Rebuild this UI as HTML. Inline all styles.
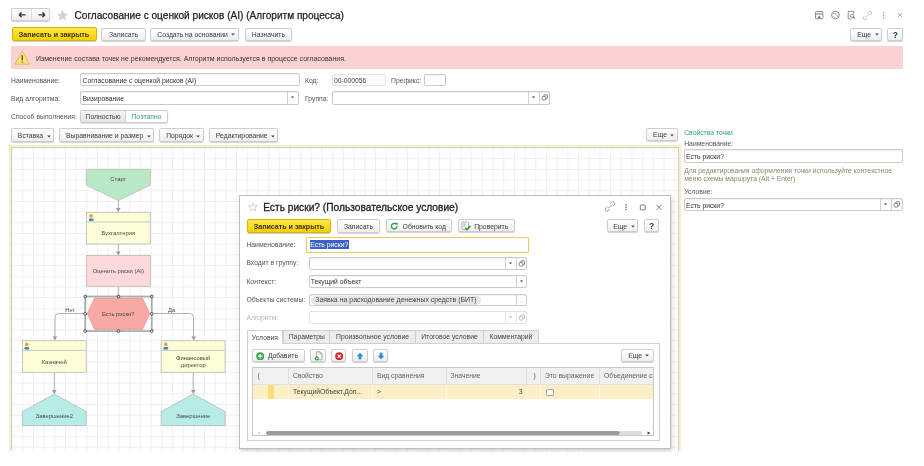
<!DOCTYPE html>
<html><head><meta charset="utf-8">
<style>
*{box-sizing:border-box;margin:0;padding:0}
html,body{width:924px;height:466px;overflow:hidden;background:#fff}
body{filter:blur(0.4px)}
body{position:relative;font-family:"Liberation Sans",sans-serif;font-size:6.8px;color:#3a3a3a}
.a{position:absolute}
.t{position:absolute;white-space:nowrap;line-height:1}
.btn{position:absolute;border:1px solid #cdcdcd;border-radius:2px;background:linear-gradient(#ffffff,#eeeeee);box-shadow:0 1px 1px rgba(0,0,0,.18);color:#3c3c3c;text-align:center;white-space:nowrap;font-size:6.8px}
.yb{position:absolute;border:1px solid #d6b400;border-radius:2px;background:linear-gradient(#ffe94a,#f5cf00);box-shadow:0 1px 1px rgba(0,0,0,.2);color:#3a3300;text-align:center;white-space:nowrap;font-weight:bold;font-size:7.1px;-webkit-text-stroke:0}
.inp{position:absolute;border:1px solid #cacaca;border-radius:2px;background:#fff;box-shadow:inset 0 1px 1px rgba(0,0,0,.06);color:#333;white-space:nowrap;overflow:hidden;padding-left:1.2px}
.dd{position:absolute;top:0;bottom:0;border-left:1px solid #d0d0d0}
.arr{display:inline-block;vertical-align:middle;margin-left:3.5px;position:relative;top:-0.5px}
.lbl{position:absolute;white-space:nowrap;color:#555;line-height:1}
</style></head><body>

<!-- top nav -->
<div class="btn" style="left:11px;top:8.2px;width:39.2px;height:13.2px;"></div>
<div class="a" style="left:31px;top:9.2px;width:1px;height:11px;background:#dcdcdc"></div>
<svg class="a" style="left:11px;top:8.4px" width="40" height="14" viewBox="0 0 40 14">
  <path d="M8 6.8h6.5M8 6.8l2.6-2.4M8 6.8l2.6 2.4" stroke="#333" stroke-width="1.3" fill="none"/>
  <path d="M34 6.8h-6.5M34 6.8l-2.6-2.4M34 6.8l-2.6 2.4" stroke="#333" stroke-width="1.3" fill="none"/>
</svg>
<svg class="a" style="left:56px;top:9px" width="13" height="13" viewBox="0 0 24 24"><path d="M12 1.5l3.1 7 7.4.6-5.6 4.9 1.7 7.3L12 17.4l-6.6 3.9 1.7-7.3L1.5 9.1l7.4-.6z" fill="#d3d3d3"/></svg>
<div class="t" style="left:74.5px;top:10.5px;font-size:10.1px;color:#222;-webkit-text-stroke:0.25px #222">Согласование с оценкой рисков (AI) (Алгоритм процесса)</div>

<!-- top-right icons -->
<svg class="a" style="left:812px;top:9px" width="95" height="12" viewBox="0 0 95 12">
  <g fill="none" stroke="#858585" stroke-width="0.9">
    <rect x="3.5" y="2.5" width="7.4" height="7.2" rx="0.8"/>
    <path d="M3.8 4.3h6.8M3.8 5.6h6.8" stroke-width="0.7"/>
    <circle cx="23.4" cy="6.1" r="3.9"/>
    <path d="M21 5.2c0.8-1.4 2-1.2 2.6-0.6 0.6 0.6 0.2 1.3 1 1.6 0.7 0.3 1.2 0.9 0.7 1.8M21.4 7.4c0.6 0.4 1.2 0.6 1.4 1.2" stroke-width="0.8"/>
    <path d="M36.2 2.4h5.6v3M36.2 2.4v7.5h3.2"/>
    <circle cx="39.9" cy="6.8" r="1.6"/>
  </g>
  <rect x="6.3" y="7.4" width="2" height="1.8" fill="#555"/>
  <path d="M41.1 8l1.7 1.7" stroke="#666" stroke-width="1.1"/>
  <g fill="none" stroke="#bdbdbd" stroke-width="0.9">
    <path d="M53.5 8.5l4-4M52.8 6.8l-1 1a1.6 1.6 0 0 0 2.3 2.3l1-1M58.2 6.2l1-1a1.6 1.6 0 0 0-2.3-2.3l-1 1"/>
  </g>
  <g fill="#8a8a8a"><rect x="71" y="3" width="1" height="1.3"/><rect x="71" y="5.6" width="1" height="1.3"/><rect x="71" y="8.2" width="1" height="1.3"/></g>
  <path d="M86 4l4 4M90 4l-4 4" stroke="#a8a8a8" stroke-width="0.9"/>
</svg>

<!-- command bar -->
<div class="yb" style="left:11.5px;top:27.3px;width:85px;height:13.5px;line-height:14px">Записать и закрыть</div>
<div class="btn" style="left:101.4px;top:27.5px;width:44.3px;height:13.3px;line-height:11.3px">Записать</div>
<div class="btn" style="left:150.2px;top:27.5px;width:89.3px;height:13.3px;line-height:11.3px;padding-left:3px">Создать на основании<svg class="arr" width="4" height="3" viewBox="0 0 4 3"><path d="M0.2 0.6H3.8L2 2.6z" fill="#444"/></svg></div>
<div class="btn" style="left:244.5px;top:27.5px;width:47.8px;height:13.3px;line-height:11.3px">Назначить</div>
<div class="btn" style="left:850.3px;top:27.5px;width:32.2px;height:13px;line-height:11px;padding-left:3px">Еще<svg class="arr" width="4" height="3" viewBox="0 0 4 3"><path d="M0.2 0.6H3.8L2 2.6z" fill="#444"/></svg></div>
<div class="btn" style="left:887.2px;top:27.5px;width:16.2px;height:13px;line-height:12px;font-weight:bold;color:#333;font-size:8.5px">?</div>

<!-- warning bar -->
<div class="a" style="left:11px;top:46.3px;width:892.4px;height:22.3px;background:#fad2d2"></div>
<svg class="a" style="left:14px;top:49.5px" width="17" height="16" viewBox="0 0 17 16">
  <path d="M8.3 1.2L15.6 14.2H1z" fill="#f8e27a" stroke="#d9bf4a" stroke-width="0.9" stroke-linejoin="round"/>
  <path d="M8.3 5.2v5" stroke="#6b5a10" stroke-width="1.4"/><circle cx="8.3" cy="12" r="0.8" fill="#6b5a10"/>
</svg>
<div class="t" style="left:35.9px;top:55px;font-size:7px;color:#3a3030">Изменение состава точек не рекомендуется. Алгоритм используется в процессе согласования.</div>

<!-- form -->
<div class="lbl" style="left:11px;top:78px">Наименование:</div>
<div class="inp" style="left:80.3px;top:73.3px;width:219.5px;height:13.2px;line-height:13.2px">Согласование с оценкой рисков (AI)</div>
<div class="lbl" style="left:305px;top:78px">Код:</div>
<div class="inp" style="left:331.7px;top:73.8px;width:53.9px;height:12.7px;line-height:12.7px;background:#fdfdfd;border-color:#e2e2e2;box-shadow:none;color:#444">00-000056</div>
<div class="lbl" style="left:391px;top:78px">Префикс:</div>
<div class="inp" style="left:423.7px;top:73.8px;width:22px;height:12.7px"></div>

<div class="lbl" style="left:11px;top:96px">Вид алгоритма:</div>
<div class="inp" style="left:80.3px;top:91.3px;width:219px;height:13.5px;line-height:13.5px">Визирование<div class="dd" style="left:206.2px;width:11px"><svg width="11" height="12"><path d="M2.9 4.5h3.2l-1.6 1.7z" fill="#444"/></svg></div></div>
<div class="lbl" style="left:305px;top:96px">Группа:</div>
<div class="inp" style="left:331.7px;top:91.3px;width:218.6px;height:13.5px"><div class="dd" style="left:195.3px;width:11px"><svg width="11" height="12"><path d="M2.9 4.5h3.2l-1.6 1.7z" fill="#444"/></svg></div><div class="dd" style="left:206.6px;width:11px"><svg width="11" height="12"><g fill="#fff" stroke="#666" stroke-width="0.75"><rect x="3.9" y="2.8" width="3.6" height="3.6" rx="0.4"/><rect x="2.2" y="4.4" width="3.6" height="3.6" rx="0.4"/></g></svg></div></div>

<div class="lbl" style="left:11px;top:113.8px">Способ выполнения:</div>
<div class="a" style="left:80.1px;top:110px;width:87.8px;height:13.1px;border:1px solid #cdcdcd;border-radius:2px;box-shadow:0 1px 1px rgba(0,0,0,.15);overflow:hidden">
  <div class="a" style="left:0;top:0;width:45px;height:100%;background:linear-gradient(#f6f6f6,#e4e4e4);border-right:1px solid #cfcfcf;text-align:center;line-height:11px;color:#444">Полностью</div>
  <div class="a" style="left:45px;top:0;right:0;height:100%;text-align:center;line-height:11px;color:#3e9e6a">Поэтапно</div>
</div>

<!-- toolbar -->
<div class="btn" style="left:11.4px;top:128.3px;width:42.7px;height:13.4px;line-height:13.6px;padding-left:3px">Вставка<svg class="arr" width="4" height="3" viewBox="0 0 4 3"><path d="M0.2 0.6H3.8L2 2.6z" fill="#444"/></svg></div>
<div class="btn" style="left:59.4px;top:128.3px;width:95.1px;height:13.4px;line-height:13.6px;padding-left:3px">Выравнивание и размер<svg class="arr" width="4" height="3" viewBox="0 0 4 3"><path d="M0.2 0.6H3.8L2 2.6z" fill="#444"/></svg></div>
<div class="btn" style="left:159.4px;top:128.3px;width:44.8px;height:13.4px;line-height:13.6px;padding-left:3px">Порядок<svg class="arr" width="4" height="3" viewBox="0 0 4 3"><path d="M0.2 0.6H3.8L2 2.6z" fill="#444"/></svg></div>
<div class="btn" style="left:209.4px;top:128.3px;width:69.1px;height:13.4px;line-height:13.6px;padding-left:3px">Редактирование<svg class="arr" width="4" height="3" viewBox="0 0 4 3"><path d="M0.2 0.6H3.8L2 2.6z" fill="#444"/></svg></div>
<div class="btn" style="left:646.4px;top:128.3px;width:31.8px;height:13px;line-height:11px;padding-left:3px">Еще<svg class="arr" width="4" height="3" viewBox="0 0 4 3"><path d="M0.2 0.6H3.8L2 2.6z" fill="#444"/></svg></div>

<!-- right panel -->
<div class="t" style="left:684.2px;top:130.2px;color:#35a06a">Свойства точки</div>
<div class="lbl" style="left:684.2px;top:141.1px">Наименование:</div>
<div class="inp" style="left:683.8px;top:149px;width:219.6px;height:13.6px;line-height:13.6px">Есть риски?</div>
<div class="t" style="left:684.2px;top:167px;color:#8a8670;line-height:7.6px">Для редактирования оформления точки используйте контекстное<br>меню схемы маршрута (Alt + Enter)</div>
<div class="lbl" style="left:684.2px;top:189.4px">Условие:</div>
<div class="inp" style="left:683.8px;top:198.3px;width:219.6px;height:13px;line-height:13px">Есть риски?<div class="dd" style="left:195.1px;width:11.5px"><svg width="11" height="12"><path d="M2.9 4.5h3.2l-1.6 1.7z" fill="#444"/></svg></div><div class="dd" style="left:206.6px;width:11px"><svg width="11" height="12"><g fill="#fff" stroke="#666" stroke-width="0.75"><rect x="3.9" y="2.8" width="3.6" height="3.6" rx="0.4"/><rect x="2.2" y="4.4" width="3.6" height="3.6" rx="0.4"/></g></svg></div></div>

<!-- canvas -->
<div class="a" style="left:9.3px;top:145.3px;width:671.8px;height:306px;border:2px solid #f7f0c2;border-bottom:none;overflow:hidden">
 <div class="a" style="left:0;top:0;right:0;bottom:0;border-top:1px solid #d2d2d2;border-left:1px solid #d2d2d2;border-right:1px solid #d2d2d2;
  background-image:linear-gradient(to right,#eeeeee 1px,transparent 1px),linear-gradient(to bottom,#eeeeee 1px,transparent 1px);background-size:10.69px 10.69px;background-position:-0.4px 10.2px"></div>
</div>


<!-- diagram -->
<svg class="a" style="left:0;top:0;-webkit-text-stroke:0" width="924" height="466" viewBox="0 0 924 466">
 <g stroke="#a9a9a9" stroke-width="0.9" fill="none">
  <path d="M118.3 200.5V209"/>
  <path d="M118.3 244V252.5"/>
  <path d="M118.3 286.3V296"/>
  <path d="M85 313.5H59a4 4 0 0 0-4 4V337"/>
  <path d="M152 313.5H189.5a4 4 0 0 1 4 4V337"/>
  <path d="M54.3 372.3V390.5"/>
  <path d="M193.2 372.3V390.5"/>
 </g>
 <g fill="#9a9a9a">
  <path d="M116 208h4.6l-2.3 4z"/>
  <path d="M116 251.5h4.6l-2.3 4z"/>
  <path d="M52.6 336.5h4.6l-2.3 4z"/>
  <path d="M191.4 336.5h4.6l-2.3 4z"/>
  <path d="M52 390h4.6l-2.3 4z"/>
  <path d="M190.9 390h4.6l-2.3 4z"/>
 </g>
 <g stroke="#b9b9b9" stroke-width="0.8">
  <path d="M86.2 169.3H150.3V185.1L118.3 200.5L86.2 185.1Z" fill="#b8e8c5"/>
  <rect x="86.4" y="212.3" width="63.9" height="31.7" fill="#fdfdd7"/>
  <path d="M86.4 222H150.3" />
  <rect x="86.6" y="255.4" width="63.7" height="30.9" fill="#fed9d9"/>
  <path d="M87.3 313.5L94.6 298.1H142.5L149.8 313.5L142.5 329.4H94.6Z" fill="#f8a8a5" stroke="#e09a96"/>
  <rect x="22.4" y="340.7" width="63.8" height="31.6" fill="#fdfdd7"/>
  <path d="M22.4 350.4H86.2"/>
  <rect x="161.2" y="340.7" width="63.9" height="31.6" fill="#fdfdd7"/>
  <path d="M161.2 350.4H225.1"/>
  <path d="M22.4 411.5L54.3 394L86.2 411.5V425.5H22.4Z" fill="#b6ebe6"/>
  <path d="M161.2 411.5L193.2 394L225.1 411.5V425.5H161.2Z" fill="#b6ebe6"/>
 </g>
 <g stroke="#a0a0a0" stroke-width="1.6" fill="none">
  <rect x="85.2" y="296.5" width="66.6" height="34.6"/>
 </g>
 <g stroke="#d0d0d0" stroke-width="0.6" stroke-dasharray="0.7 0.9" fill="none">
  <rect x="85.2" y="296.5" width="66.6" height="34.6"/>
 </g>
 <g fill="#e8e8e8" stroke="#4a4a4a" stroke-width="0.9">
  <rect x="84" y="295.3" width="2.4" height="2.4" rx="0.6"/><rect x="117.3" y="295.3" width="2.4" height="2.4" rx="0.6"/><rect x="150.6" y="295.3" width="2.4" height="2.4" rx="0.6"/>
  <rect x="84" y="312.6" width="2.4" height="2.4" rx="0.6"/><rect x="150.6" y="312.6" width="2.4" height="2.4" rx="0.6"/>
  <rect x="84" y="329.9" width="2.4" height="2.4" rx="0.6"/><rect x="117.3" y="329.9" width="2.4" height="2.4" rx="0.6"/><rect x="150.6" y="329.9" width="2.4" height="2.4" rx="0.6"/>
 </g>
 <g id="person">
  <circle cx="91.1" cy="215.9" r="1.8" fill="#d9a24a"/>
  <rect x="88.8" y="218.6" width="4.8" height="2.4" rx="1" fill="#3a86c8"/>
 </g>
 <use href="#person" x="-64.4" y="128.5"/>
 <use href="#person" x="74.6" y="128.5"/>
 <g font-family="Liberation Sans" font-size="5.85" fill="#4a4a4a" text-anchor="middle" style="-webkit-text-stroke:0">
  <text x="118.3" y="181.4">Старт</text>
  <text x="118.3" y="235.1">Бухгалтерия</text>
  <text x="118.3" y="273">Оценить риски (AI)</text>
  <text x="118.3" y="316.1">Есть риски?</text>
  <text x="54.3" y="363.6">Казначей</text>
  <text x="193.2" y="360">Финансовый</text>
  <text x="193.2" y="367.1">директор</text>
  <text x="54.3" y="417.9">Завершение2</text>
  <text x="193.2" y="417.9">Завершение</text>
  <text x="70.3" y="312.1">Нет</text>
  <text x="171.7" y="312.1">Да</text>
 </g>
</svg>


<!-- dialog -->
<div class="a" style="left:239.4px;top:195.3px;width:431.4px;height:253.3px;background:#fff;border:1px solid #bdbdbd;box-shadow:1px 2px 3px rgba(0,0,0,.18)"></div>
<svg class="a" style="left:247.7px;top:201.6px" width="10" height="9.5" viewBox="0 0 24 23"><path d="M12 1.8l3 6.9 7.4.6-5.6 4.9 1.7 7.3L12 17.6l-6.5 3.9 1.7-7.3-5.6-4.9 7.4-.6z" fill="none" stroke="#c6c6c6" stroke-width="1.8"/></svg>
<div class="t" style="left:263.2px;top:203px;font-size:10.2px;color:#1e1e1e;-webkit-text-stroke:0.3px #1e1e1e">Есть риски? (Пользовательское условие)</div>
<svg class="a" style="left:600px;top:200px" width="70" height="14" viewBox="0 0 70 14">
  <g fill="none" stroke="#8a8a8a" stroke-width="0.9">
   <path d="M8 8.5l4-4M7.2 6.6l-1.3 1.3a1.8 1.8 0 0 0 2.6 2.6l1.3-1.3M12.8 6.4l1.3-1.3a1.8 1.8 0 0 0-2.6-2.6l-1.3 1.3"/>
   <rect x="40.3" y="4.9" width="5" height="5" rx="0.6" stroke="#707070" stroke-width="0.9"/>
   <path d="M56.6 4.8l5 5M61.6 4.8l-5 5" stroke="#707070" stroke-width="0.9"/>
  </g>
  <g fill="#505050"><rect x="25.5" y="4.2" width="1.1" height="1.4"/><rect x="25.5" y="6.5" width="1.1" height="1.4"/><rect x="25.5" y="8.8" width="1.1" height="1.4"/></g>
</svg>
<div class="yb" style="left:246.5px;top:219.2px;width:84.9px;height:13.5px;line-height:14px">Записать и закрыть</div>
<div class="btn" style="left:336.6px;top:219.2px;width:43.7px;height:13.4px;line-height:13.2px">Записать</div>
<div class="btn" style="left:386.1px;top:219.3px;width:66.3px;height:13.2px;line-height:13px;text-align:left;padding-left:15.5px">Обновить код</div>
<svg class="a" style="left:389.8px;top:222px" width="8.4" height="8.4" viewBox="0 0 10 10"><path d="M8.3 5A3.3 3.3 0 1 1 7.2 2.5" fill="none" stroke="#3aa23e" stroke-width="1.7"/><path d="M5.8 0.6L9.4 1.1L8.6 4.4z" fill="#3aa23e"/></svg>
<div class="btn" style="left:458px;top:219.3px;width:56.5px;height:13.2px;line-height:13px;text-align:left;padding-left:15.2px">Проверить</div>
<svg class="a" style="left:460.5px;top:221px" width="11" height="10" viewBox="0 0 11 10"><rect x="0.9" y="0.9" width="6.6" height="7.6" rx="1" fill="#f2f4f6" stroke="#a8b0b8" stroke-width="0.9"/><path d="M2.3 3h2.6M2.3 4.6h1.6" stroke="#7fb0d8" stroke-width="0.9"/><path d="M4.3 6.8l1.6 1.7 3.4-3.4" fill="none" stroke="#2f9e2f" stroke-width="1.6"/></svg>
<div class="btn" style="left:606.6px;top:219.2px;width:31.8px;height:13.3px;line-height:13.1px;padding-left:3px">Еще<svg class="arr" width="4" height="3" viewBox="0 0 4 3"><path d="M0.2 0.6H3.8L2 2.6z" fill="#444"/></svg></div>
<div class="btn" style="left:644.2px;top:219.2px;width:14.8px;height:13.3px;line-height:13px;font-weight:bold;color:#333;font-size:8.5px">?</div>

<div class="lbl" style="left:246.4px;top:241.6px">Наименование:</div>
<div class="a" style="left:306.3px;top:236.8px;width:222.7px;height:16.1px;border:1.3px solid #efcb4a;border-radius:1px;background:#fff"></div>
<div class="a" style="left:310.2px;top:240.2px;width:39.2px;height:8.7px;background:#3d62c6"></div>
<div class="t" style="left:310.3px;top:241.5px;color:#fff">Есть риски?</div>

<div class="lbl" style="left:246.4px;top:259.9px">Входит в группу:</div>
<div class="inp" style="left:308.5px;top:256.5px;width:218.5px;height:13.2px"><div class="dd" style="left:195px;width:11px"><svg width="11" height="12"><path d="M2.9 4.5h3.2l-1.6 1.7z" fill="#444"/></svg></div><div class="dd" style="left:206.3px;width:11px"><svg width="11" height="12"><g fill="#fff" stroke="#666" stroke-width="0.75"><rect x="3.9" y="2.8" width="3.6" height="3.6" rx="0.4"/><rect x="2.2" y="4.4" width="3.6" height="3.6" rx="0.4"/></g></svg></div></div>

<div class="lbl" style="left:246.4px;top:279.1px">Контекст:</div>
<div class="inp" style="left:308.5px;top:275px;width:218.5px;height:13px;line-height:11px">Текущий объект<div class="dd" style="left:206.3px;width:11px"><svg width="11" height="12"><path d="M2.9 4.5h3.2l-1.6 1.7z" fill="#444"/></svg></div></div>

<div class="lbl" style="left:246.4px;top:296.6px">Объекты системы:</div>
<div class="inp" style="left:308.5px;top:293.5px;width:218.5px;height:12.8px"><div class="a" style="left:1.3px;top:1.8px;width:170.5px;height:8.8px;border-radius:4.4px;background:#e6e6e6"></div><div class="t" style="left:5.7px;top:2.7px;font-size:6.95px;color:#444">Заявка на расходование денежных средств (БИТ)</div><div class="dd" style="left:206.3px;width:11px;color:#999;font-size:6px;line-height:12px;text-align:center">...</div></div>

<div class="lbl" style="left:246.4px;top:314.6px;color:#b5b5b5">Алгоритм:</div>
<div class="inp" style="left:308.5px;top:311.2px;width:218.5px;height:13.1px;border-color:#e2e2e2;box-shadow:none"><div class="dd" style="left:195px;width:11px;border-color:#e8e8e8"><svg width="11" height="12"><path d="M2.9 4.5h3.2l-1.6 1.7z" fill="#aaa"/></svg></div><div class="dd" style="left:206.3px;width:11px;border-color:#e8e8e8"><svg width="11" height="12"><g fill="#fff" stroke="#b0b0b0" stroke-width="0.75"><rect x="3.9" y="2.8" width="3.6" height="3.6" rx="0.4"/><rect x="2.2" y="4.4" width="3.6" height="3.6" rx="0.4"/></g></svg></div></div>

<!-- tabs -->
<div class="a" style="left:246.6px;top:343.4px;width:413.1px;height:98.1px;border:1px solid #d0d0d0;background:#fff"></div>
<div class="a" style="left:283.3px;top:330.4px;width:47.1px;height:13px;border:1px solid #d0d0d0;border-bottom:none;background:#ececec;text-align:center;line-height:12px;color:#444">Параметры</div>
<div class="a" style="left:330.4px;top:330.4px;width:85.2px;height:13px;border:1px solid #d0d0d0;border-left:none;border-bottom:none;background:#ececec;text-align:center;line-height:12px;color:#444">Произвольное условие</div>
<div class="a" style="left:415.6px;top:330.4px;width:68.8px;height:13px;border:1px solid #d0d0d0;border-left:none;border-bottom:none;background:#ececec;text-align:center;line-height:12px;color:#444">Итоговое условие</div>
<div class="a" style="left:484.4px;top:330.4px;width:54.2px;height:13px;border:1px solid #d0d0d0;border-left:none;border-bottom:none;background:#ececec;text-align:center;line-height:12px;color:#444">Комментарий</div>
<div class="a" style="left:246.6px;top:329.5px;width:36.7px;height:14.9px;border:1px solid #d0d0d0;border-bottom:none;background:#fff;text-align:center;line-height:13px;color:#444">Условия</div>

<div class="btn" style="left:252.4px;top:348.9px;width:52.9px;height:13.1px;line-height:11.1px;text-align:left;padding-left:14.5px">Добавить</div>
<svg class="a" style="left:256px;top:351.6px" width="8.4" height="8.4" viewBox="0 0 16 16"><circle cx="8" cy="8" r="7.6" fill="#38a844"/><path d="M8 3.6v8.8M3.6 8h8.8" stroke="#fff" stroke-width="2.4"/></svg>
<div class="btn" style="left:310.4px;top:348.9px;width:15.7px;height:13.1px"></div>
<svg class="a" style="left:314px;top:350.8px" width="9" height="10" viewBox="0 0 18 20"><path d="M5 1.5h7l4 4v12H5z" fill="#f6f6f6" stroke="#8c8c8c" stroke-width="1.4"/><path d="M12 1.5v4h4" fill="none" stroke="#8c8c8c" stroke-width="1.2"/><circle cx="5.6" cy="14.8" r="4.2" fill="#38a844"/><circle cx="5.6" cy="14.8" r="1.7" fill="#fff"/></svg>
<div class="btn" style="left:331.3px;top:348.9px;width:15.2px;height:13.1px"></div>
<svg class="a" style="left:334.8px;top:351.5px" width="8.4" height="8.4" viewBox="0 0 16 16"><circle cx="8" cy="8" r="7.6" fill="#d7232b"/><path d="M5 5l6 6M11 5l-6 6" stroke="#fff" stroke-width="2.2"/></svg>
<div class="btn" style="left:352.4px;top:348.9px;width:15.3px;height:13.1px"></div>
<svg class="a" style="left:356.4px;top:351.8px" width="8" height="8" viewBox="0 0 8 8"><path d="M4 0.8L7.4 4.2H5.4V7.2H2.6V4.2H0.6z" fill="#2a8fd6"/></svg>
<div class="btn" style="left:373.2px;top:348.9px;width:15.3px;height:13.1px"></div>
<svg class="a" style="left:377px;top:351.8px" width="8" height="8" viewBox="0 0 8 8"><path d="M4 7.2L7.4 3.8H5.4V0.8H2.6V3.8H0.6z" fill="#2a8fd6"/></svg>
<div class="btn" style="left:621px;top:348.6px;width:32.6px;height:13.8px;line-height:11.8px;padding-left:3px">Еще<svg class="arr" width="4" height="3" viewBox="0 0 4 3"><path d="M0.2 0.6H3.8L2 2.6z" fill="#444"/></svg></div>

<!-- table -->
<div class="a" style="left:252.4px;top:367.4px;width:401.2px;height:69px;border:1px solid #c8c8c8;background:#fff;overflow:hidden">
  <div class="a" style="left:0;top:0;right:0;height:16.4px;background:#f0f0f0;border-bottom:1px solid #e2e2e2"></div>
  <div class="a" style="left:0;top:16.4px;right:0;height:14.6px;background:#fdefc5"></div>
  <div class="a" style="left:14.4px;top:16.4px;width:6.5px;height:14.6px;background:#fbdc7c"></div>
  <div class="a" style="left:34.7px;top:0;width:1px;height:16.4px;background:#e0e0e0"></div><div class="a" style="left:34.7px;top:16.4px;width:1px;height:14.6px;background:#fff8e2"></div>
  <div class="a" style="left:119px;top:0;width:1px;height:16.4px;background:#e0e0e0"></div><div class="a" style="left:119px;top:16.4px;width:1px;height:14.6px;background:#fff8e2"></div>
  <div class="a" style="left:192.3px;top:0;width:1px;height:16.4px;background:#e0e0e0"></div><div class="a" style="left:192.3px;top:16.4px;width:1px;height:14.6px;background:#fff8e2"></div>
  <div class="a" style="left:272.8px;top:0;width:1px;height:16.4px;background:#e0e0e0"></div><div class="a" style="left:272.8px;top:16.4px;width:1px;height:14.6px;background:#fff8e2"></div>
  <div class="a" style="left:287px;top:0;width:1px;height:16.4px;background:#e0e0e0"></div><div class="a" style="left:287px;top:16.4px;width:1px;height:14.6px;background:#fff8e2"></div>
  <div class="a" style="left:345.8px;top:0;width:1px;height:16.4px;background:#e0e0e0"></div><div class="a" style="left:345.8px;top:16.4px;width:1px;height:14.6px;background:#fff8e2"></div>
  <div class="t" style="left:4px;top:4.8px;color:#666">(</div>
  <div class="t" style="left:39.5px;top:4.8px;color:#666">Свойство</div>
  <div class="t" style="left:123.5px;top:4.8px;color:#666">Вид сравнения</div>
  <div class="t" style="left:197px;top:4.8px;color:#666">Значение</div>
  <div class="t" style="left:280px;top:4.8px;color:#666">)</div>
  <div class="t" style="left:291.5px;top:4.8px;color:#666">Это выражение</div>
  <div class="t" style="left:350.5px;top:4.8px;color:#666">Объединение с</div>
  <div class="t" style="left:39.5px;top:20.6px;color:#444">ТекущийОбъект.Доп...</div>
  <div class="t" style="left:123.5px;top:20.6px;color:#444">&gt;</div>
  <div class="t" style="left:265.3px;top:20.6px;color:#444">3</div>
  <div class="a" style="left:292.8px;top:20.4px;width:7.8px;height:7.6px;border:1px solid #a8a8a8;border-radius:1px;background:#fff"></div>
  <div class="a" style="left:12.3px;top:63px;width:354.6px;height:4px;border-radius:2px;background:#9c9c9c"></div>
  <div class="a" style="left:366.9px;top:63px;width:21.5px;height:4px;border-radius:0 2px 2px 0;background:#dcdcdc"></div>
  <svg class="a" style="left:3px;top:62px" width="6" height="6"><path d="M4 1.5L1.8 3L4 4.5z" fill="#c4c4c4"/></svg>
  <svg class="a" style="left:392.5px;top:62px" width="6" height="6"><path d="M1.5 1.2L4.3 3L1.5 4.8z" fill="#444"/></svg>
</div>

</body></html>
